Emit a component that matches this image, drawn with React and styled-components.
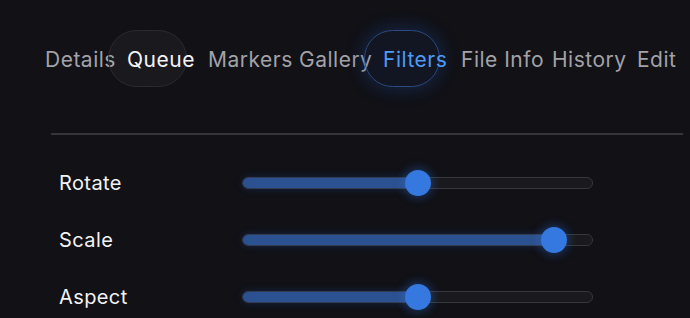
import styled, { createGlobalStyle } from "styled-components"

const GlobalStyle = createGlobalStyle`
body {
  margin: 0;
  background: #111116;
  font-family: "Inter", "Liberation Sans", sans-serif;
}
`

const Page = styled.div`
width: 690px;
height: 318px;
overflow: hidden;
background: #111116;
`
const TabBar = styled.div`
display: flex;
gap: 2px;
padding: 30px 0 0 26px;
height: 57px;
`
const Tab = styled.div`
box-sizing: border-box;
flex: 0 0 auto;
width: ${p => p.w}px;
height: 57px;
padding: 1px 0 0 18px;
display: flex;
align-items: center;
white-space: nowrap;
font-size: 21px;
letter-spacing: 0.5px;
color: ${p => (p.active ? "#4d9bf5" : p.hover ? "#f4f4f6" : "#a2a2a8")};
border-radius: 29px;
border: 1px solid ${p => (p.active ? "#2b4b82" : p.hover ? "#2a2a2f" : "transparent")};
background: ${p => (p.active ? "rgba(40, 90, 200, 0.07)" : p.hover ? "rgba(255, 255, 255, 0.035)" : "transparent")};
box-shadow: ${p => (p.active ? "0 0 16px 4px rgba(30, 80, 170, 0.28)" : "none")};
`
const Divider = styled.div`
margin: 46px 7px 0 51px;
height: 2px;
background: #35353a;
`
const Sliders = styled.div`
padding: 19px 0 0 59px;
`
const Row = styled.div`
display: flex;
align-items: center;
height: 57px;
`
const Label = styled.div`
width: 183px;
font-size: 20px;
letter-spacing: 0.4px;
color: #f2f2f4;
`
const Track = styled.div`
position: relative;
box-sizing: border-box;
width: 351px;
height: 12px;
border-radius: 6px;
background: #1a1a1e;
border: 1px solid #37373c;
`
const Fill = styled.div`
height: 100%;
border-radius: 6px;
background: #2c5190;
box-shadow: 0 0 8px rgba(40, 90, 190, 0.35);
`
const Thumb = styled.div`
position: absolute;
top: 50%;
width: 26px;
height: 26px;
border-radius: 50%;
background: #3478e0;
transform: translate(-50%, -50%);
box-shadow: 0 0 10px 2px rgba(50, 120, 230, 0.35);
`

const tabs = [
  { name: "Details", w: 80 },
  { name: "Queue", w: 79, hover: true },
  { name: "Markers", w: 89 },
  { name: "Gallery", w: 82 },
  { name: "Filters", w: 76, active: true },
  { name: "File Info", w: 89 },
  { name: "History", w: 83 },
  { name: "Edit", w: 60 },
]

const sliders = [
  { name: "Rotate", value: 50 },
  { name: "Scale", value: 89 },
  { name: "Aspect", value: 50 },
]

const App = () => {
  return (
    <Page>
      <GlobalStyle />
      <TabBar>
        {tabs.map(t => (
          <Tab key={t.name} w={t.w} active={t.active} hover={t.hover}>
            {t.name}
          </Tab>
        ))}
      </TabBar>
      <Divider />
      <Sliders>
        {sliders.map(s => (
          <Row key={s.name}>
            <Label>{s.name}</Label>
            <Track>
              <Fill style={{ width: `${s.value}%` }} />
              <Thumb style={{ left: `${s.value}%` }} />
            </Track>
          </Row>
        ))}
      </Sliders>
    </Page>
  )
}

export default App
